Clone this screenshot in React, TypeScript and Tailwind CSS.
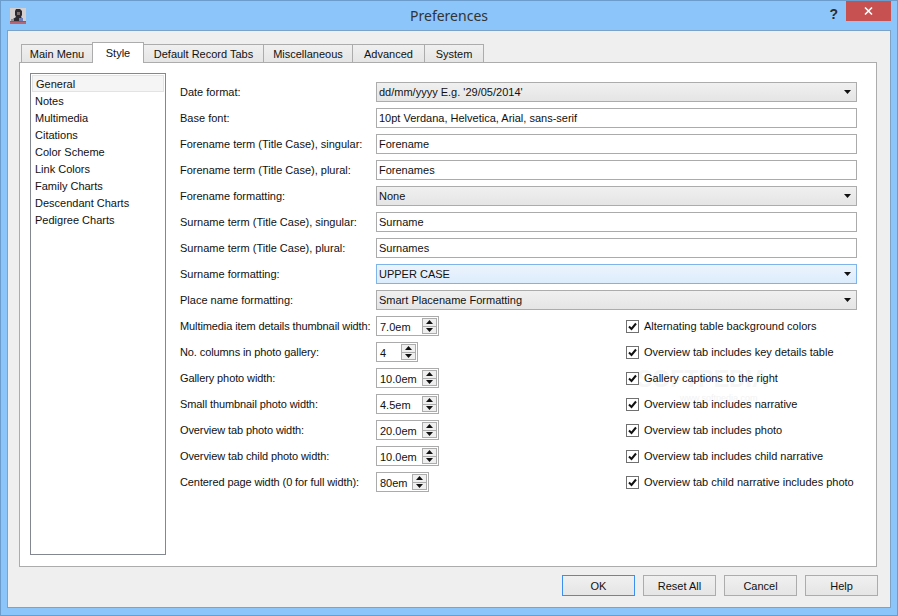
import React from "react";

const tabs = [
  { label: "Main Menu", width: "w-[72px]" },
  { label: "Style", width: "w-[52px]", active: true },
  { label: "Default Record Tabs", width: "w-[121px]" },
  { label: "Miscellaneous", width: "w-[90px]" },
  { label: "Advanced", width: "w-[73px]" },
  { label: "System", width: "w-[60px]" },
];

const categories = [
  "General",
  "Notes",
  "Multimedia",
  "Citations",
  "Color Scheme",
  "Link Colors",
  "Family Charts",
  "Descendant Charts",
  "Pedigree Charts",
];

const fields = [
  { label: "Date format:", value: "dd/mm/yyyy E.g. '29/05/2014'", combo: true },
  { label: "Base font:", value: "10pt Verdana, Helvetica, Arial, sans-serif" },
  { label: "Forename term (Title Case), singular:", value: "Forename" },
  { label: "Forename term (Title Case), plural:", value: "Forenames" },
  { label: "Forename formatting:", value: "None", combo: true },
  { label: "Surname term (Title Case), singular:", value: "Surname" },
  { label: "Surname term (Title Case), plural:", value: "Surnames" },
  { label: "Surname formatting:", value: "UPPER CASE", combo: true, focused: true },
  { label: "Place name formatting:", value: "Smart Placename Formatting", combo: true },
];

const spinners = [
  { label: "Multimedia item details thumbnail width:", value: "7.0em", width: "w-[63px]" },
  { label: "No. columns in photo gallery:", value: "4", width: "w-[42px]" },
  { label: "Gallery photo width:", value: "10.0em", width: "w-[63px]" },
  { label: "Small thumbnail photo width:", value: "4.5em", width: "w-[63px]" },
  { label: "Overview tab photo width:", value: "20.0em", width: "w-[63px]" },
  { label: "Overview tab child photo width:", value: "10.0em", width: "w-[63px]" },
  { label: "Centered page width (0 for full width):", value: "80em", width: "w-[53px]" },
];

const checks = [
  "Alternating table background colors",
  "Overview tab includes key details table",
  "Gallery captions to the right",
  "Overview tab includes narrative",
  "Overview tab includes photo",
  "Overview tab includes child narrative",
  "Overview tab child narrative includes photo",
];

const buttons = ["OK", "Reset All", "Cancel", "Help"];

const Arrow = ({ up = false }: { up?: boolean }) => (
  <svg width="7" height="4" viewBox="0 0 7 4" className="block">
    <path d={up ? "M3.5 0L7 4H0z" : "M0 0h7L3.5 4z"} fill="#111" />
  </svg>
);

const Spinner = ({ value, width }: { value: string; width: string }) => (
  <div className={`flex h-5 ${width} items-center border border-[#ababab] bg-white pl-[3px]`}>
    <span className="flex-1 pt-[2px]">{value}</span>
    <div className="mr-[1px] flex h-[16px] w-[15px] flex-col border border-[#acacac] bg-[#efefef]">
      <div className="flex flex-1 items-center justify-center border-b border-[#acacac]">
        <Arrow up />
      </div>
      <div className="flex flex-1 items-center justify-center">
        <Arrow />
      </div>
    </div>
  </div>
);

export default function App() {
  return (
    <div className="flex h-[616px] w-[898px] flex-col overflow-hidden border border-[#6b9ccb] bg-[#8bc5fa] font-['Liberation_Sans',sans-serif] text-[11px] leading-none text-[#111]">
      <div className="relative flex h-[29px] shrink-0 items-center px-[9px]">
        <div className="flex-1">
          <svg width="16" height="16" viewBox="0 0 16 16" className="block">
            <rect width="16" height="16" fill="#d4d0d2" />
            <path d="M6 1h4l2 2v4l-1 2 2 2v2H3v-2l3-2-1-2V3z" fill="#2a2a30" />
            <rect x="7" y="4" width="3" height="3" fill="#7d6c68" />
            <rect x="1" y="11" width="3" height="2" fill="#8f8f96" />
            <rect y="13" width="16" height="1" fill="#5566a6" />
            <rect y="14" width="16" height="2" fill="#b86472" />
            <rect x="9" y="10" width="4" height="3" fill="#6d7fb8" />
          </svg>
        </div>
        <div className="font-['Noto_Sans',sans-serif] text-[14px] text-[#333]">Preferences</div>
        <div className="flex flex-1 justify-end">
          <span className="mr-[50px] mb-1 text-[14px] font-bold text-[#2b2b2b]">?</span>
        </div>
        <div className="absolute top-0 right-[6px] flex h-[20px] w-[45px] items-center justify-center bg-[#c75050]">
          <svg width="9" height="8" viewBox="0 0 9 8">
            <path d="M1 0.5l7 7M8 0.5l-7 7" stroke="#fff" strokeWidth="1.6" />
          </svg>
        </div>
      </div>

      <div className="mx-[6px] mb-[7px] flex flex-1 flex-col border border-[#7da2c6] bg-[#efefef] pt-[10px] pr-[12px] pl-[11px]">
        <div className="flex h-[21px] items-end pl-[3px]">
          {tabs.map((tab) => (
            <div
              key={tab.label}
              className={
                tab.active
                  ? `relative z-10 -mb-px -ml-px flex h-[21px] ${tab.width} items-center justify-center border border-b-0 border-[#acacac] bg-white`
                  : `-ml-px flex h-[18px] ${tab.width} items-center justify-center border border-b-0 border-[#acacac] bg-gradient-to-b from-[#f0f0f0] to-[#e5e5e5] pt-[1px]`
              }
            >
              {tab.label}
            </div>
          ))}
        </div>

        <div className="relative mr-[1px] flex h-[505px] gap-[14px] border border-[#acacac] bg-white pt-[10px] pr-[19px] pb-[11px] pl-[10px]">
          {/* watermark */}
          <div className="absolute top-[305px] left-[617px] text-[23px] font-bold text-[#f6f6f6]">
            SOFTPEDIA
          </div>
          <div className="absolute top-[331px] left-[660px] text-[9px] text-[#f3f3f3]">
            www.softpedia.com
          </div>

          <div className="relative w-[136px] shrink-0 border border-[#828790] p-[1px]">
            {categories.map((cat, i) => (
              <div
                key={cat}
                className={`flex h-[17px] items-center pt-[2px] pl-[3px] ${i === 0 ? "border border-[#e3e3e3] bg-[#f5f5f5]" : ""}`}
              >
                {cat}
              </div>
            ))}
          </div>

          <div className="relative flex flex-1 flex-col gap-[6px] pt-[9px]">
            {fields.map((f) => (
              <div key={f.label} className="flex h-5 items-center">
                <span className="w-[196px] shrink-0 pt-[1px]">{f.label}</span>
                {f.combo ? (
                  <div
                    className={`flex h-5 flex-1 items-center justify-between border pr-[5px] pl-[2px] ${
                      f.focused
                        ? "border-[#7eb4ea] bg-gradient-to-b from-[#ecf4fc] to-[#dcecfc]"
                        : "border-[#acacac] bg-gradient-to-b from-[#f0f0f0] to-[#e5e5e5]"
                    }`}
                  >
                    <span className="pt-[1px]">{f.value}</span>
                    <Arrow />
                  </div>
                ) : (
                  <div className="flex h-5 flex-1 items-center border border-[#ababab] bg-white pt-[1px] pl-[2px]">
                    {f.value}
                  </div>
                )}
              </div>
            ))}

            <div className="flex">
              <div className="flex flex-col gap-[6px]">
                {spinners.map((s) => (
                  <div key={s.label} className="flex h-5 items-center">
                    <span className="w-[196px] shrink-0 pt-[1px] tracking-[-0.1px]">{s.label}</span>
                    <Spinner value={s.value} width={s.width} />
                  </div>
                ))}
              </div>
              <div className="ml-auto flex w-[231px] flex-col gap-[6px]">
                {checks.map((c) => (
                  <div key={c} className="flex h-5 items-center gap-[5px]">
                    <div className="flex h-[13px] w-[13px] items-center justify-center border border-[#707070] bg-white">
                      <svg width="11" height="11" viewBox="0 0 11 11">
                        <path d="M2 5.5l2.5 2.5L9 2.5" fill="none" stroke="#111" strokeWidth="2" />
                      </svg>
                    </div>
                    <span className="pt-[1px]">{c}</span>
                  </div>
                ))}
              </div>
            </div>
          </div>
        </div>

        <div className="flex justify-end gap-[8px] pt-[8px]">
          {buttons.map((b, i) => (
            <div
              key={b}
              className={`flex h-[21px] w-[73px] items-center justify-center border bg-gradient-to-b from-[#f0f0f0] to-[#e5e5e5] pt-[1px] ${
                i === 0 ? "border-[#3c8ff0]" : "border-[#acacac]"
              }`}
            >
              {b}
            </div>
          ))}
        </div>
      </div>
    </div>
  );
}
